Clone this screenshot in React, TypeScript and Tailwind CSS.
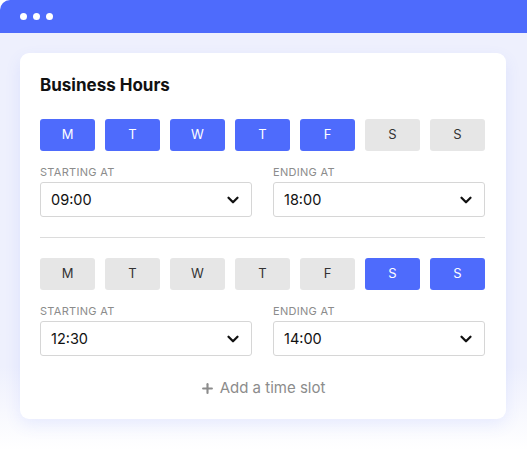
import { ChevronDown, Plus } from "lucide-react";

type Slot = {
  days: boolean[];
  start: string;
  end: string;
};

const DAYS = ["M", "T", "W", "T", "F", "S", "S"];

const slots: Slot[] = [
  { days: [true, true, true, true, true, false, false], start: "09:00", end: "18:00" },
  { days: [false, false, false, false, false, true, true], start: "12:30", end: "14:00" },
];

const TimeSelect = ({ label, value }: { label: string; value: string }) => (
  <div>
    <div className="text-[11px] leading-[14px] tracking-[0.3px] text-[#8c8c8c] mb-[3px]">{label}</div>
    <div className="h-[35px] flex items-center justify-between pl-[10px] pr-[9px] border border-[#d6d6d6] rounded-[3px] bg-white">
      <span className="text-[14.5px] text-[#111]">{value}</span>
      <ChevronDown size={18} strokeWidth={3} className="text-[#111]" />
    </div>
  </div>
);

const SlotRow = ({ slot }: { slot: Slot }) => (
  <div>
    <div className="flex gap-[10px]">
      {DAYS.map((d, i) => (
        <button
          key={i}
          className={
            slot.days[i]
              ? "w-[55px] h-[32px] rounded-[3px] bg-[#4e6bfc] text-white text-[13px]"
              : "w-[55px] h-[32px] rounded-[3px] bg-[#e6e6e6] text-[#333] text-[13px]"
          }
        >
          {d}
        </button>
      ))}
    </div>
    <div className="grid grid-cols-2 gap-[21px] mt-[14px]">
      <TimeSelect label="STARTING AT" value={slot.start} />
      <TimeSelect label="ENDING AT" value={slot.end} />
    </div>
  </div>
);

const App = () => {
  return (
    <div className="w-[527px] h-[450px] bg-white overflow-hidden" style={{ fontFamily: "Inter, 'Noto Sans', sans-serif" }}>
      <div className="h-[33px] bg-[#4e6bfc] rounded-tl-[10px] flex items-center gap-[6px] pl-[20px]">
        <span className="w-[7px] h-[7px] rounded-full bg-white" />
        <span className="w-[7px] h-[7px] rounded-full bg-white" />
        <span className="w-[7px] h-[7px] rounded-full bg-white" />
      </div>
      <div className="h-[417px] bg-gradient-to-b from-[#eef0fd] from-80% to-white px-[20px] pt-[20px]">
        <div className="w-[486px] bg-white rounded-[9px] shadow-[0_6px_16px_rgba(78,107,252,0.10)] pl-[20px] pr-[21px] pt-[20px] pb-[22px]">
          <h2 className="text-[17px] leading-[24px] font-bold text-[#111]">Business Hours</h2>
          <div className="mt-[22px]">
            <SlotRow slot={slots[0]} />
          </div>
          <div className="h-px bg-[#dcdcdc] my-[20px]" />
          <SlotRow slot={slots[1]} />
          <div className="flex items-center justify-center gap-[5px] mt-[23px] text-[#8c8c8c]">
            <Plus size={15} strokeWidth={3.4} />
            <span className="text-[15px] leading-[18px]">Add a time slot</span>
          </div>
        </div>
      </div>
    </div>
  );
};

export default App;
